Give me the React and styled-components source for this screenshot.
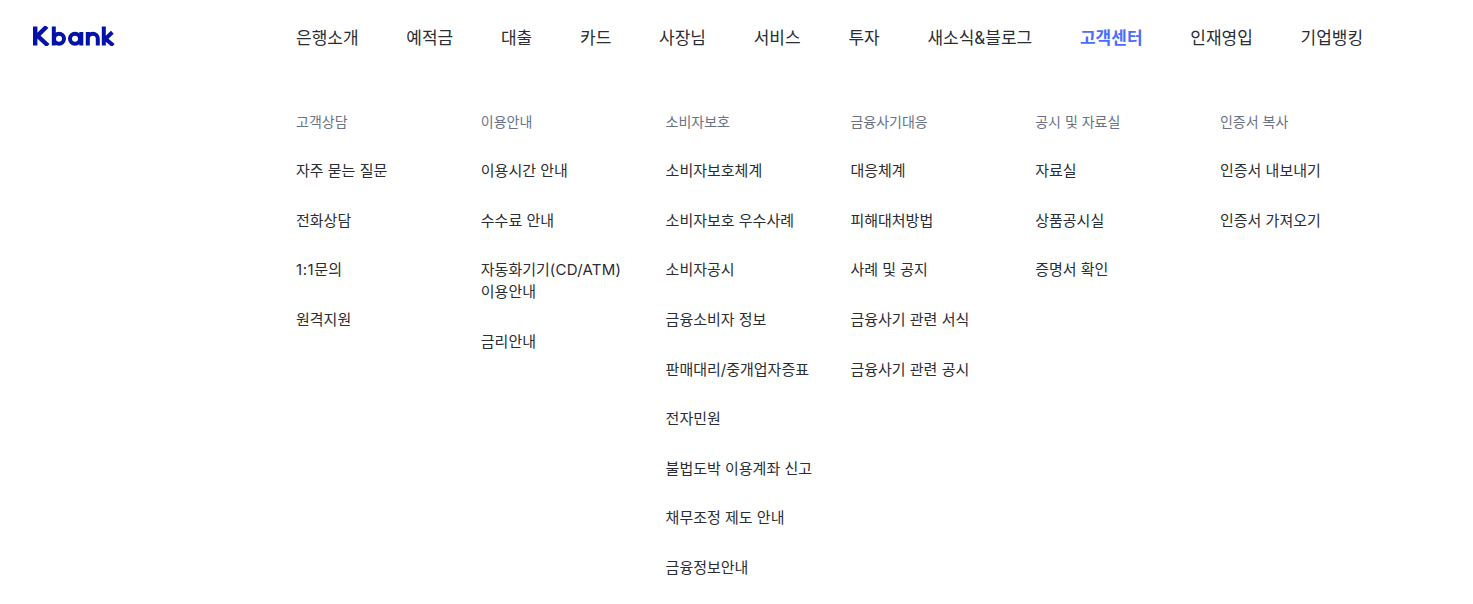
import React from "react";
import styled, { createGlobalStyle } from "styled-components";

const Global = createGlobalStyle`
    html, body {
        margin: 0;
        padding: 0;
        background: #fff;
        overflow: hidden;
    }
    body {
        font-family: Inter, "Noto Sans CJK KR", sans-serif;
    }
`

const Page = styled.div`
    width: 1473px;
    height: 604px;
    overflow: hidden;
`

const Header = styled.header`
    display: flex;
    align-items: center;
    height: 74px;
    padding-left: 33px;
`

const Logo = styled.a`
    display: block;
    width: 263px;
    height: 20px;
    margin-top: -2px;
    color: #0512a8;
`

const Nav = styled.nav`
    display: flex;
    gap: 47.75px;
    padding-top: 2px;
`

const NavItem = styled.a`
    font-size: 17px;
    line-height: 24px;
    font-weight: ${p => (p.$active ? 700 : 400)};
    color: ${p => (p.$active ? "#4a6cff" : "#2a2d33")};
`

const Menu = styled.div`
    display: grid;
    grid-template-columns: repeat(6, 184.8px);
    padding: 37px 0 0 296px;
`

const Column = styled.section`
    display: flex;
    flex-direction: column;
`

const Heading = styled.h3`
    margin: 0 0 27.3px;
    font-size: 14px;
    line-height: 22px;
    font-weight: 400;
    color: #697286;
`

const List = styled.ul`
    display: flex;
    flex-direction: column;
    gap: 27.6px;
    margin: 0;
    padding: 0;
    list-style: none;
`

const Item = styled.li`
    width: 150px;
    font-size: 15px;
    line-height: 22px;
    color: #2a2d33;
`

const Latin = styled.span`
    letter-spacing: ${p => p.$spacing}px;
`

const navItems = ["은행소개", "예적금", "대출", "카드", "사장님", "서비스", "투자", "새소식&블로그", "고객센터", "인재영입", "기업뱅킹"];

const columns = [
    { title: "고객상담", items: ["자주 묻는 질문", "전화상담", <><Latin $spacing={0.6}>1:1</Latin>문의</>, "원격지원"] },
    { title: "이용안내", items: ["이용시간 안내", "수수료 안내", <>자동화기기<Latin $spacing={0.25}>(CD/ATM)</Latin> 이용안내</>, "금리안내"] },
    {
        title: "소비자보호",
        items: ["소비자보호체계", "소비자보호 우수사례", "소비자공시", "금융소비자 정보", "판매대리/중개업자증표", "전자민원", "불법도박 이용계좌 신고", "채무조정 제도 안내", "금융정보안내"],
    },
    { title: "금융사기대응", items: ["대응체계", "피해대처방법", "사례 및 공지", "금융사기 관련 서식", "금융사기 관련 공시"] },
    { title: "공시 및 자료실", items: ["자료실", "상품공시실", "증명서 확인"] },
    { title: "인증서 복사", items: ["인증서 내보내기", "인증서 가져오기"] },
];

function LogoMark() {
    return (
        <svg width="82" height="20" viewBox="0 0 82 20" fill="none" stroke="currentColor" strokeWidth="4" role="img" aria-label="Kbank">
            <path d="M2.2 0.5V19.5M13.8 0.5L4.5 9.8L15 19.5" strokeWidth="4.4" />
            <path d="M20.8 0.5V19.5" />
            <circle cx="26" cy="12.8" r="5" />
            <circle cx="42" cy="12.8" r="5" />
            <path d="M48.3 6V19.5" />
            <path d="M54.8 6V19.5M54.8 12.8a5 5 0 0 1 10 0V19.5" />
            <path d="M70.8 0.5V19.5M79.3 6.2L72.5 12.8L80.3 19.5" />
        </svg>
    )
}

function App() {
    return (
        <Page>
            <Global />
            <Header>
                <Logo><LogoMark /></Logo>
                <Nav>
                    {navItems.map(name => (
                        <NavItem key={name} $active={name === "고객센터"}>{name}</NavItem>
                    ))}
                </Nav>
            </Header>
            <Menu>
                {columns.map(col => (
                    <Column key={col.title}>
                        <Heading>{col.title}</Heading>
                        <List>
                            {col.items.map((item, i) => <Item key={i}>{item}</Item>)}
                        </List>
                    </Column>
                ))}
            </Menu>
        </Page>
    )
}

export default App;
